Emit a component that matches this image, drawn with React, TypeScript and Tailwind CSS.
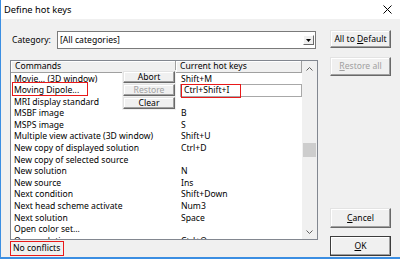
import { ReactNode } from 'react';
import clsx from 'clsx';

const rows: [string, string][] = [
    ['Movie... (3D window)', 'Shift+M'],
    ['Moving Dipole...', ''],
    ['MRI display standard', ''],
    ['MSBF image', 'B'],
    ['MSPS image', 'S'],
    ['Multiple view activate (3D window)', 'Shift+U'],
    ['New copy of displayed solution', 'Ctrl+D'],
    ['New copy of selected source', ''],
    ['New solution', 'N'],
    ['New source', 'Ins'],
    ['Next condition', 'Shift+Down'],
    ['Next head scheme activate', 'Num3'],
    ['Next solution', 'Space'],
    ['Open color set...', ''],
    ['Open solution', 'Ctrl+O'],
];

// Botão clássico do Windows (relevo)
const Btn = ({ children, disabled, isDefault, className }: { children: ReactNode; disabled?: boolean; isDefault?: boolean; className?: string }) => (
    <div
        className={clsx(
            'flex items-center justify-center whitespace-pre bg-[#f0f0f0] border shadow-[inset_-1px_-1px_0_#a0a0a0,inset_1px_1px_0_#ffffff]',
            isDefault ? 'border-[#3c3c3c]' : 'border-t-[#e3e3e3] border-l-[#e3e3e3] border-r-[#696969] border-b-[#696969]',
            disabled ? 'text-[#a0a0a0]' : 'text-black',
            className
        )}
    >
        <span>{children}</span>
    </div>
);

const HeaderCell = ({ children, className }: { children: ReactNode; className?: string }) => (
    <div className={clsx('flex items-center pl-[4px] h-full bg-[#f0f0f0] border-r border-b border-r-[#a0a0a0] border-b-[#a0a0a0] shadow-[inset_1px_1px_0_#ffffff]', className)}>
        {children}
    </div>
);

export default function App() {
    return (
        <div
            className="w-[400px] h-[259px] overflow-hidden bg-[#f0f0f0] flex flex-col border-l border-b-2 border-[#3b8ee2] text-[8.6px] text-black leading-none"
            style={{ fontFamily: '"Noto Sans", "DejaVu Sans", sans-serif' }}
        >
            {/* Barra de título */}
            <div className="h-[19px] bg-white flex items-center justify-between pl-[3px] pr-[8px] shrink-0">
                <span className="text-[9.3px]">Define hot keys</span>
                <svg width="9" height="9" viewBox="0 0 9 9" className="text-black">
                    <path d="M0.5 0.5 L8.5 8.5 M8.5 0.5 L0.5 8.5" stroke="currentColor" strokeWidth="1" />
                </svg>
            </div>

            <div className="flex flex-1 pl-[9px] gap-[12px] min-h-0">
                {/* Coluna esquerda */}
                <div className="w-[308px] flex flex-col">
                    <div className="flex items-center mt-[12px] h-[18px]">
                        <span className="w-[47px] pl-[2px]">Category:</span>
                        <div className="w-[259px] h-full bg-white border border-[#7a7a7a] flex items-center justify-between pl-[2px] pr-[1px]">
                            <span>[All categories]</span>
                            <div className="w-[11px] h-[10px] bg-[#f0f0f0] border border-t-white border-l-white border-r-[#696969] border-b-[#696969] flex items-center justify-center">
                                <svg width="5" height="3" viewBox="0 0 5 3">
                                    <path d="M0 0 H5 L2.5 3 Z" fill="#000" />
                                </svg>
                            </div>
                        </div>
                    </div>

                    {/* Lista de comandos */}
                    <div className="relative mt-[11px] h-[180px] bg-white border border-[#828790] flex">
                        <div className="flex-1 flex flex-col min-w-0">
                            <div className="h-[12px] flex shrink-0">
                                <HeaderCell className="w-[165px]">Commands</HeaderCell>
                                <HeaderCell className="flex-1">Current hot keys</HeaderCell>
                            </div>
                            <div className="flex-1 overflow-hidden">
                                {rows.map(([cmd, key], i) => (
                                    <div key={cmd} className="h-[11.6px] flex items-center">
                                        <div className="w-[165px] pl-[3px] relative whitespace-nowrap">
                                            {cmd}
                                            {i === 1 && <div className="absolute left-[1px] top-[-4px] w-[76px] h-[14px] border-[1.5px] border-[#e8191a]" />}
                                        </div>
                                        <div className="flex-1 pl-[5px] relative whitespace-nowrap">
                                            {i === 1 ? (
                                                <div className="relative -ml-[1px] h-[13px] border border-[#a8a8a8] flex items-center pl-[3px] bg-white">
                                                    Ctrl+Shift+I
                                                    <div className="absolute left-0 top-[-1px] w-[60px] h-[14px] border-[1.5px] border-[#e8191a]" />
                                                </div>
                                            ) : (
                                                key
                                            )}
                                        </div>
                                    </div>
                                ))}
                            </div>
                        </div>

                        {/* Barra de rolagem */}
                        <div className="w-[15px] bg-[#f0f0f0] flex flex-col items-center">
                            <div className="h-[15px] flex items-center justify-center">
                                <svg width="7" height="4" viewBox="0 0 7 4">
                                    <path d="M0.5 3.5 L3.5 0.5 L6.5 3.5" stroke="#606060" fill="none" />
                                </svg>
                            </div>
                            <div className="h-[67px]" />
                            <div className="w-[13px] h-[14px] bg-[#cdcdcd]" />
                            <div className="flex-1" />
                            <div className="h-[15px] flex items-center justify-center">
                                <svg width="7" height="4" viewBox="0 0 7 4">
                                    <path d="M0.5 0.5 L3.5 3.5 L6.5 0.5" stroke="#606060" fill="none" />
                                </svg>
                            </div>
                        </div>

                        {/* Menu flutuante */}
                        <div className="absolute left-[111px] top-[9px] w-[54px] flex flex-col gap-[1px] bg-[#f0f0f0] p-[1px]">
                            <Btn className="h-[12px]">Abort</Btn>
                            <Btn className="h-[12px]" disabled>Restore</Btn>
                            <Btn className="h-[12px]">Clear</Btn>
                        </div>
                    </div>

                    {/* Barra de status */}
                    <div className="h-[16px] flex items-center">
                        <div className="h-[15px] w-[54px] whitespace-nowrap border-[1.5px] border-[#e8191a] flex items-center pl-[2px]">No conflicts</div>
                    </div>
                </div>

                {/* Coluna direita */}
                <div className="w-[61px] flex flex-col pb-[1px]">
                    <Btn className="mt-[11px] h-[18px]">
                        All to <span className="underline">D</span>efault
                    </Btn>
                    <Btn className="mt-[9px] h-[19px]" disabled>
                        <span className="underline">R</span>estore all
                    </Btn>
                    <div className="flex-1" />
                    <Btn className="h-[20px]">
                        <span className="underline">C</span>ancel
                    </Btn>
                    <Btn className="mt-[8px] h-[20px]" isDefault>
                        <span className="underline">O</span>K
                    </Btn>
                </div>
            </div>
        </div>
    );
}
